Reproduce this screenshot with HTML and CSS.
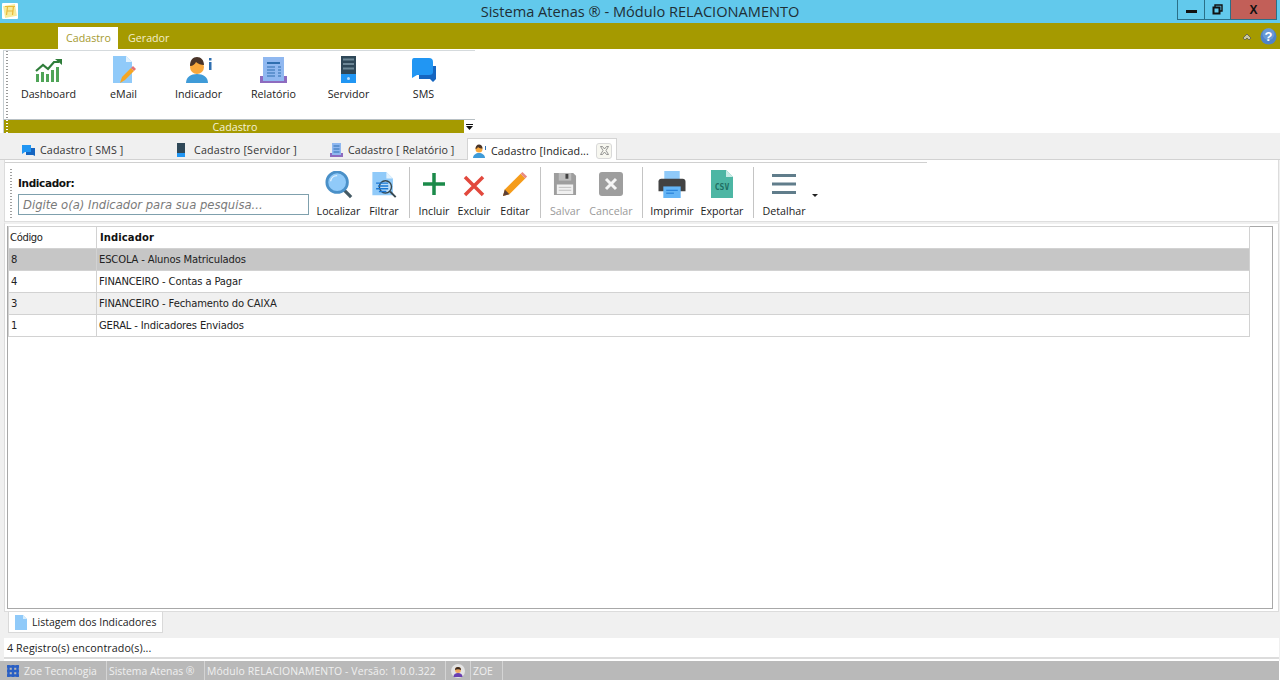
FILE: index.html
```html
<!DOCTYPE html>
<html lang="pt">
<head>
<meta charset="utf-8">
<title>Sistema Atenas</title>
<link rel="stylesheet" href="styles.css">
</head>
<body>
<div class="app">
  <header class="titlebar">
    <svg class="logo" width="16" height="16" viewBox="0 0 16 16"><rect width="16" height="16" rx="1" fill="#fff"/><rect x="2" y="2" width="12" height="12" fill="#f7eb9a" transform="rotate(-10 8 8)"/><path d="M5.500 4 4.500 12M11.500 3 10.500 12M5 8h6M3 3.500h10" stroke="#e8b93a" stroke-width="1.200" fill="none"/></svg>
    <div class="title">Sistema Atenas ® - Módulo RELACIONAMENTO</div>
    <div class="winctl">
      <div class="wbtn wmin"><span></span></div>
      <div class="wbtn wmax"><svg width="11" height="11" viewBox="0 0 11 11"><path d="M3 3V1h7v6H8" fill="none" stroke="#111" stroke-width="1.400"/><rect x="1.500" y="3.500" width="6" height="6" fill="none" stroke="#111" stroke-width="2"/></svg></div>
      <div class="wbtn wclose">X</div>
    </div>
  </header>

  <nav class="menubar">
    <div class="mtab active">Cadastro</div>
    <div class="mtab">Gerador</div>
    <div class="menuright">
      <svg width="10" height="9" viewBox="0 0 10 9"><path d="M1 6 5 2l4 4-2 2-2-2-2 2Z" fill="#c9c6a0" stroke="#6b6b50" stroke-width="1"/></svg>
      <svg width="17" height="17" viewBox="0 0 17 17"><circle cx="8.500" cy="8.500" r="8" fill="#4f83c8"/><circle cx="8.500" cy="6" r="6" fill="#7aa8e0" opacity=".6"/><text x="8.500" y="13" text-anchor="middle" class="helpq">?</text></svg>
    </div>
  </nav>

  <section class="ribbon">
    <div class="rgroup">
      <div class="ritems">
        <div class="ritem">
          <svg width="28" height="28" viewBox="0 0 28 26"><g fill="#4fa457"><rect x="1" y="17" width="3" height="8"/><rect x="6" y="15" width="3" height="10"/><rect x="11" y="17" width="3" height="8"/><rect x="16" y="13" width="3" height="12"/><rect x="21" y="10" width="3" height="15"/></g><path d="M1 14 8 8l5 4 6-7 5 0" fill="none" stroke="#2f7d3a" stroke-width="2.200"/><path d="M20 2h7v6Z" fill="#2f7d3a"/></svg>
          <span>Dashboard</span>
        </div>
        <div class="ritem">
          <svg width="24" height="28" viewBox="0 0 24 28"><path d="M1 0h13l6 6v21H1Z" fill="#90caf9"/><path d="M14 0l6 6h-6Z" fill="#e3f2fd"/><path d="M8 27l2-6 9-9 3 3-9 9Z" fill="#f5a623"/><path d="M19 12l2-2 3 3-2 2Z" fill="#e57373"/></svg>
          <span>eMail</span>
        </div>
        <div class="ritem">
          <svg width="28" height="28" viewBox="0 0 28 28"><path d="M1 27c0-6 5-9 11-9s11 3 11 9Z" fill="#3f9bd8"/><circle cx="12" cy="11" r="7" fill="#f9a83c"/><path d="M5 10c0-6 3-9 7-9s7 3 7 8c-3 0-6-1-8-3-1 2-3 4-6 4Z" fill="#4a3428"/><rect x="24" y="6" width="2.500" height="8" fill="#2f6fb0"/><rect x="24" y="2" width="2.500" height="2.500" fill="#2f6fb0"/></svg>
          <span>Indicador</span>
        </div>
        <div class="ritem">
          <svg width="28" height="28" viewBox="0 0 28 28"><rect x="0" y="20" width="27" height="7" fill="#8e6bbf"/><rect x="3" y="1" width="21" height="24" fill="#90b8f0"/><rect x="7" y="6" width="13" height="2" fill="#2f6fb0"/><path d="M7 11h8M7 14h8M7 17h8M7 20h8M18 11h3M18 14h3M18 17h3M18 20h3" stroke="#2f6fb0" stroke-width="1.200"/></svg>
          <span>Relatório</span>
        </div>
        <div class="ritem">
          <svg width="16" height="28" viewBox="0 0 16 28"><rect x="0" y="0" width="15" height="27" fill="#2196f3"/><rect x="0" y="0" width="15" height="18" fill="#2f4858"/><path d="M2 3.500h11M2 8h11M2 12.500h11" stroke="#6d8796" stroke-width="2"/><circle cx="7.500" cy="22.500" r="1.500" fill="#bbdefb"/></svg>
          <span>Servidor</span>
        </div>
        <div class="ritem">
          <svg width="26" height="26" viewBox="0 0 26 26"><path d="M8 9h17v13l-3 3-3-3H8Z" fill="#1565c0"/><path d="M3 1h15q4 0 4 4v10q0 3-4 3H6l-5 3V4q0-3 2-3Z" fill="#2196f3"/></svg>
          <span>SMS</span>
        </div>
      </div>
      <div class="rfoot">
        <span class="rfoot-t">Cadastro</span>
        <span class="rfoot-btn"><svg width="7" height="6" viewBox="0 0 7 6"><path d="M0 0h7v1H0ZM0 2h7L3.500 6Z" fill="#111"/></svg></span>
      </div>
    </div>
  </section>

  <div class="doctabs">
    <div class="dtab t1">
      <svg width="13" height="11" viewBox="0 0 13 11"><path d="M4 3h9v8l-2-1H4Z" fill="#1565c0"/><path d="M0 0h9v7H3L0 9Z" fill="#2196f3"/></svg>
      <span>Cadastro [ SMS ]</span>
    </div>
    <div class="dtab t2">
      <svg width="8" height="14" viewBox="0 0 8 14"><rect width="8" height="14" fill="#2196f3"/><rect width="8" height="10" fill="#2f4858"/></svg>
      <span>Cadastro [Servidor ]</span>
    </div>
    <div class="dtab t3">
      <svg width="13" height="14" viewBox="0 0 13 14"><rect y="10" width="13" height="4" fill="#8e6bbf"/><rect x="2" width="9" height="12" fill="#90b8f0"/><path d="M3.500 3h6M3.500 6h6M3.500 9h6" stroke="#2f6fb0"/></svg>
      <span>Cadastro [ Relatório ]</span>
    </div>
    <div class="dtab t4">
      <svg width="14" height="14" viewBox="0 0 14 14"><path d="M0 14c0-3 3-5 6-5s6 2 6 5Z" fill="#3f9bd8"/><circle cx="6" cy="5" r="3.500" fill="#f9a83c"/><path d="M2.500 5c0-3 1.500-4.500 3.500-4.500S9.500 2 9.500 4.500C8 4.500 6 4 5 3 4.500 4 3.500 5 2.500 5Z" fill="#4a3428"/><rect x="12" y="2" width="1" height="4" fill="#2f6fb0"/></svg>
      <span class="t4label">Cadastro [Indicad...</span>
      <span class="dclose"><svg width="11" height="11" viewBox="0 0 11 11"><path d="M1.500 1.500h2L5.500 4l2-2.500h2L7 5.500l2.500 4h-2l-2-2.500-2 2.500h-2L4 5.500Z" fill="none" stroke="#7d7d7d" stroke-width=".8"/></svg></span>
    </div>
  </div>

  <main class="docbody">
    <div class="toolbar">
      <div class="searchbox">
        <label class="slabel">Indicador:</label>
        <input class="sinput" placeholder="Digite o(a) Indicador para sua pesquisa...">
      </div>
      <div class="tgroup">
        <div class="tbtn b-loc">
          <svg width="28" height="28" viewBox="0 0 30 30"><path d="M20 20l8 8" stroke="#455a64" stroke-width="3.500"/><circle cx="13" cy="12" r="11" fill="#90caf9" stroke="#4a90c8" stroke-width="3"/><path d="M6 11a7 7 0 0 1 7-6" stroke="#e3f2fd" fill="none" stroke-width="1.500"/></svg>
          <span>Localizar</span>
        </div>
        <div class="tbtn b-fil">
          <svg width="27" height="28" viewBox="0 0 28 30"><path d="M1 1h15l7 7v18H1Z" fill="#90caf9"/><path d="M16 1l7 7h-7Z" fill="#e3f2fd"/><circle cx="15" cy="17" r="6.500" fill="#bbdefb" stroke="#37474f" stroke-width="1.500"/><path d="M20 22l6 6" stroke="#37474f" stroke-width="2"/><path d="M5 13h13M7 16h11M5 19h13M8 22h8" stroke="#1976d2" stroke-width="1.500"/></svg>
          <span>Filtrar</span>
        </div>
      </div>
      <div class="tgroup">
        <div class="tbtn b-inc">
          <svg width="22" height="22" viewBox="0 0 22 22"><path d="M11 0v22M0 11h22" stroke="#1b8a4a" stroke-width="3.500"/></svg>
          <span>Incluir</span>
        </div>
        <div class="tbtn b-exc">
          <svg width="22" height="22" viewBox="0 0 22 22"><path d="M2 2l18 18M20 2 2 20" stroke="#e2483d" stroke-width="3.500"/></svg>
          <span>Excluir</span>
        </div>
        <div class="tbtn b-edi">
          <svg width="26" height="26" viewBox="0 0 28 28"><path d="M1 27l2-7L20 3l5 5L8 25Z" fill="#f59c1a"/><path d="M20 3l2-2 5 5-2 2Z" fill="#e88a80"/><path d="M1 27l2-7 5 5Z" fill="#5d4037"/></svg>
          <span>Editar</span>
        </div>
      </div>
      <div class="tgroup">
        <div class="tbtn b-sal dis">
          <svg width="24" height="24" viewBox="0 0 25 25"><path d="M1 1h20l3 3v20H1Z" fill="#9e9e9e"/><rect x="6" y="1" width="13" height="8" fill="#bdbdbd"/><rect x="13" y="2" width="3" height="5" fill="#424242"/><rect x="4" y="13" width="17" height="10" fill="#f0f0f0"/><path d="M6 16h13M6 19h13" stroke="#bdbdbd"/></svg>
          <span>Salvar</span>
        </div>
        <div class="tbtn b-can dis">
          <svg width="24" height="24" viewBox="0 0 24 24"><rect width="24" height="24" rx="3" fill="#9e9e9e"/><path d="M7 7l10 10M17 7 7 17" stroke="#f5f5f5" stroke-width="3"/></svg>
          <span>Cancelar</span>
        </div>
      </div>
      <div class="tgroup">
        <div class="tbtn b-imp">
          <svg width="28" height="27" viewBox="0 0 28 28"><rect x="6" y="0" width="16" height="9" fill="#90caf9"/><path d="M3 8h22q3 0 3 3v10H0V11q0-3 3-3Z" fill="#424242"/><rect x="5" y="16" width="18" height="12" fill="#64b5f6"/><path d="M8 20h12M8 23h8" stroke="#1976d2"/></svg>
          <span>Imprimir</span>
        </div>
        <div class="tbtn b-exp">
          <svg width="22" height="28" viewBox="0 0 22 28"><path d="M0 0h15l7 7v21H0Z" fill="#4db6a4"/><path d="M15 0l7 7h-7Z" fill="#c9ece6"/><text x="11" y="20" text-anchor="middle" class="csv">CSV</text></svg>
          <span>Exportar</span>
        </div>
      </div>
      <div class="tgroup last">
        <div class="tbtn b-det">
          <svg width="24" height="20" viewBox="0 0 24 20"><path d="M0 1.500h24M0 10h24M0 18.500h24" stroke="#607d8b" stroke-width="2.800"/></svg>
          <span>Detalhar</span>
        </div>
        <span class="caret"></span>
      </div>
    </div>

    <div class="gridwrap">
      <div class="gridpanel">
        <table class="grid">
          <colgroup><col class="c1"><col></colgroup>
          <thead><tr><th class="cod">Código</th><th>Indicador</th></tr></thead>
          <tbody>
            <tr class="sel"><td>8</td><td>ESCOLA - Alunos Matriculados</td></tr>
            <tr><td>4</td><td>FINANCEIRO - Contas a Pagar</td></tr>
            <tr class="alt"><td>3</td><td>FINANCEIRO - Fechamento do CAIXA</td></tr>
            <tr><td>1</td><td>GERAL - Indicadores Enviados</td></tr>
          </tbody>
        </table>
      </div>
    </div>

    <div class="subtabs">
      <div class="subtab">
        <svg width="12" height="15" viewBox="0 0 12 15"><path d="M0 0h8l4 4v11H0Z" fill="#90caf9"/><path d="M8 0l4 4H8Z" fill="#d6ecfb"/></svg>
        <span>Listagem dos Indicadores</span>
      </div>
    </div>
    <div class="records">4 Registro(s) encontrado(s)...</div>
  </main>

  <footer class="statusbar">
    <div class="sitem s1"><svg width="12" height="12" viewBox="0 0 12 12"><path d="M0 1.500h12M0 6h12M0 10.500h12M1.500 0v12M6 0v12M10.500 0v12" stroke="#2a5fc4" stroke-width="2.400"/></svg><span>Zoe Tecnologia</span></div>
    <div class="sitem s2">Sistema Atenas ®</div>
    <div class="sitem s3">Módulo RELACIONAMENTO - Versão: 1.0.0.322</div>
    <div class="sitem s4"><svg width="14" height="14" viewBox="0 0 14 14"><circle cx="7" cy="7" r="7" fill="#e4e4e4"/><path d="M2.500 13c0-3 2-4 4.500-4s4.500 1 4.500 4Z" fill="#6a3fb0"/><circle cx="7" cy="6" r="3" fill="#f0a860"/><path d="M4 6c0-2 1-3 3-3s3 1 3 3C8 5 6 5 4 6Z" fill="#3a2a20"/></svg></div>
    <div class="sitem s5">ZOE</div>
  </footer>
</div>
</body>
</html>
```

FILE: styles.css
```css
* { box-sizing: border-box; }
html, body { margin: 0; padding: 0; }
body { font-family: "Open Sans", "Noto Sans", sans-serif; font-size: 10.7px; color: #222; background: #fff; }
.app { width: 1280px; height: 680px; display: flex; flex-direction: column; overflow: hidden; }
svg { display: block; flex: none; }

.titlebar { height: 23px; background: #62c9ec; display: flex; align-items: flex-start; padding-left: 2px; flex: none; }
.logo { margin-top: 3px; }
.title { flex: 1; text-align: center; font-size: 14.6px; line-height: 23px; color: #1f2f36; padding-left: 85px; white-space: nowrap; }
.winctl { display: flex; margin-right: 3px; height: 20px; border: 1px solid #2a6f88; border-top: 0; }
.wbtn { display: flex; align-items: center; justify-content: center; height: 19px; }
.wmin { width: 27px; border-right: 1px solid #2a6f88; }
.wmin span { width: 11px; height: 3px; background: #111; margin-top: 4px; }
.wmax { width: 26px; border-right: 1px solid #2a6f88; }
.wclose { width: 45px; background: #c25f58; color: #111; font: bold 12px "Liberation Sans", sans-serif; }

.menubar { height: 26px; background: #a59a00; display: flex; align-items: flex-end; padding-left: 58px; flex: none; }
.mtab { height: 22px; line-height: 22px; padding: 0 10px; color: #f3eecb; }
.mtab.active { width: 60px; background: #fff; color: #a59a30; padding: 0 8px; }
.menuright { margin-left: auto; height: 100%; display: flex; align-items: center; gap: 8px; padding-right: 3px; padding-top: 1px; }
.helpq { font: bold 13px "Liberation Sans", sans-serif; fill: #fff; }

.ribbon { height: 84px; background: #fff; flex: none; padding-left: 3px; padding-top: 1px; }
.rgroup { width: 472px; height: 83px; border-left: 1px solid #c6ced2; border-top: 1px solid #d5dadd; display: flex; flex-direction: column; }
.ritems { height: 69px; display: flex; border-bottom: 1px solid #b8c0c4; background-image: linear-gradient(#9a9a9a 50%, transparent 50%); background-size: 2px 3px; background-repeat: repeat-y; background-position: 2px 0; padding-left: 7px; padding-top: 5px; }
.ritem { display: flex; flex-direction: column; align-items: center; width: 75px; color: #222; }
.ritem svg { height: 28px; }
.ritem span { margin-top: 3px; line-height: 15px; }
.rfoot { height: 13px; background-color: #a59a00; background-image: linear-gradient(#fff 50%, transparent 50%); background-size: 2px 3px; background-repeat: repeat-y; background-position: 2px 0; display: flex; color: #f5f2d8; line-height: 15px; }
.rfoot-t { flex: 1; text-align: center; padding-left: 2px; }
.rfoot-btn { width: 11px; background: #fff; display: flex; align-items: center; justify-content: center; }

.doctabs { height: 27px; background: #f0f0f0; display: flex; padding-left: 8px; align-items: flex-end; flex: none; border-bottom: 1px solid #d2d2d2; }
.dtab { height: 20px; padding-top: 2px; display: flex; align-items: center; gap: 5px; padding-left: 14px; color: #333; white-space: nowrap; letter-spacing: .12px; }
.dtab.t1 { width: 155px; }
.dtab.t2 { width: 153px; gap: 9px; letter-spacing: .2px; }
.dtab.t3 { width: 151px; letter-spacing: .05px; }
.dtab.t4 { width: 150px; height: 22px; background: #fff; border: 1px solid #d4d4d4; border-bottom: 0; padding-left: 5px; margin-bottom: -1px; color: #222; gap: 4px; position: relative; }
.t4label { width: 101px; letter-spacing: .1px; }
.dclose { width: 16px; height: 16px; border: 1px solid #d9d9d9; border-radius: 3px; display: flex; align-items: center; justify-content: center; background: #f7f7f0; }

.docbody { flex: 1; min-height: 0; display: flex; flex-direction: column; padding: 0 1px 0 4px; background: #f0f0f0; }
.toolbar { height: 62px; display: flex; border-left: 1px solid #dcdcdc; border-right: 1px solid #dcdcdc; border-bottom: 1px solid #dedede; padding: 7px 0 3px 3px; background-color: #fff; background-image: linear-gradient(#a0a0a0 50%, transparent 50%), linear-gradient(#d0d0d0, #d0d0d0); background-size: 2px 3px, 922px 1px; background-repeat: repeat-y, no-repeat; background-position: 5px 0, 0 2px; background-clip: content-box, border-box; flex: none; }
.searchbox { width: 306px; padding-left: 10px; display: flex; flex-direction: column; }
.slabel { font-family: "DejaVu Sans", sans-serif; font-weight: bold; font-size: 10.5px; line-height: 14px; margin-top: 9px; color: #111; letter-spacing: -.35px; }
.sinput { width: 291px; height: 21px; margin-top: 4px; border: 1px solid #7fa0ad; padding: 0 4px; font-family: "DejaVu Sans", sans-serif; font-style: italic; font-size: 11.6px; background: #fff; outline: 0; }
.sinput::placeholder { color: #7a7a7a; opacity: 1; }
.tgroup { display: flex; border-right: 1px solid #c4c4c4; height: 51px; padding: 0 2px; }
.tgroup.last { border-right: 0; position: relative; }
.tbtn { display: flex; flex-direction: column; align-items: center; color: #222; height: 51px; white-space: nowrap; }
.tbtn svg { margin: 4px 0 auto; }
.tbtn span { line-height: 13px; }
.tbtn.dis { color: #9a9a9a; }
.csv { font: bold 8px "DejaVu Sans Mono", monospace; fill: #1f6f63; }
.b-loc { width: 45px; }
.b-fil { width: 46px; }
.b-inc { width: 44px; }
.b-exc { width: 36px; }
.b-edi { width: 46px; }
.b-sal { width: 44px; }
.b-can { width: 48px; margin-right: 5px; }
.b-imp { width: 54px; }
.b-exp { width: 46px; margin-right: 6px; }
.b-det { width: 56px; }
.b-inc svg { margin-top: 6px; }
.b-exc svg { margin-top: 8px; }
.b-sal svg, .b-can svg { margin-top: 5px; }
.b-exp svg { margin-top: 3px; }
.b-det svg { margin-top: 7px; }
.caret { position: absolute; left: 58px; top: 27px; border-left: 3px solid transparent; border-right: 3px solid transparent; border-top: 3px solid #222; }

.gridwrap { height: 390px; background: #fff; border-top: 2px solid #f0f0f0; border-left: 1px solid #dcdcdc; border-right: 1px solid #dcdcdc; border-bottom: 1px solid #dcdcdc; padding: 2px 5px 2px 2px; flex: none; }
.gridpanel { height: 383px; background: #fff; border: 1px solid #a8a8a8; }
.grid { width: 1242px; border-collapse: collapse; table-layout: fixed; margin-top: -1px; font-family: "DejaVu Sans", sans-serif; font-size: 10px; color: #222; }
.c1 { width: 88px; }
.grid th, .grid td { height: 22px; border: 1px solid #d2d2d2; padding: 0 2px; text-align: left; font-weight: normal; white-space: nowrap; letter-spacing: -.15px; }
.grid th { font-weight: bold; color: #111; letter-spacing: .1px; padding-left: 3px; }
.grid th.cod { font-weight: normal; color: #222; letter-spacing: -.35px; padding-left: 1px; }
.sel td { background: #c6c6c6; }
.alt td { background: #f0f0f0; }

.subtabs { height: 26px; display: flex; padding-left: 4px; flex: none; }
.subtab { width: 155px; height: 21px; background: #fff; border: 1px solid #d9d9d9; border-top: 0; display: flex; align-items: center; gap: 5px; padding-left: 6px; color: #222; white-space: nowrap; font-size: 10.5px; }
.records { height: 21px; background: #fff; line-height: 21px; padding-left: 3px; color: #222; border-bottom: 2px solid #dcdcdc; flex: none; box-shadow: 0 2px 0 #fff; position: relative; letter-spacing: .1px; }

.statusbar { height: 19px; margin-right: 1px; background: #b9b9b9; display: flex; align-items: center; color: #f0f0f0; font-size: 10.4px; flex: none; padding-left: 7px; }
.sitem { height: 19px; display: flex; align-items: center; border-right: 1px solid #d4d4d4; white-space: nowrap; }
.s1 { width: 100px; gap: 5px; }
.s2 { width: 98px; padding-left: 2px; }
.s3 { width: 241px; padding-left: 2px; letter-spacing: .12px; }
.s4 { width: 25px; justify-content: center; }
.s5 { width: 32px; padding-left: 2px; }
```
